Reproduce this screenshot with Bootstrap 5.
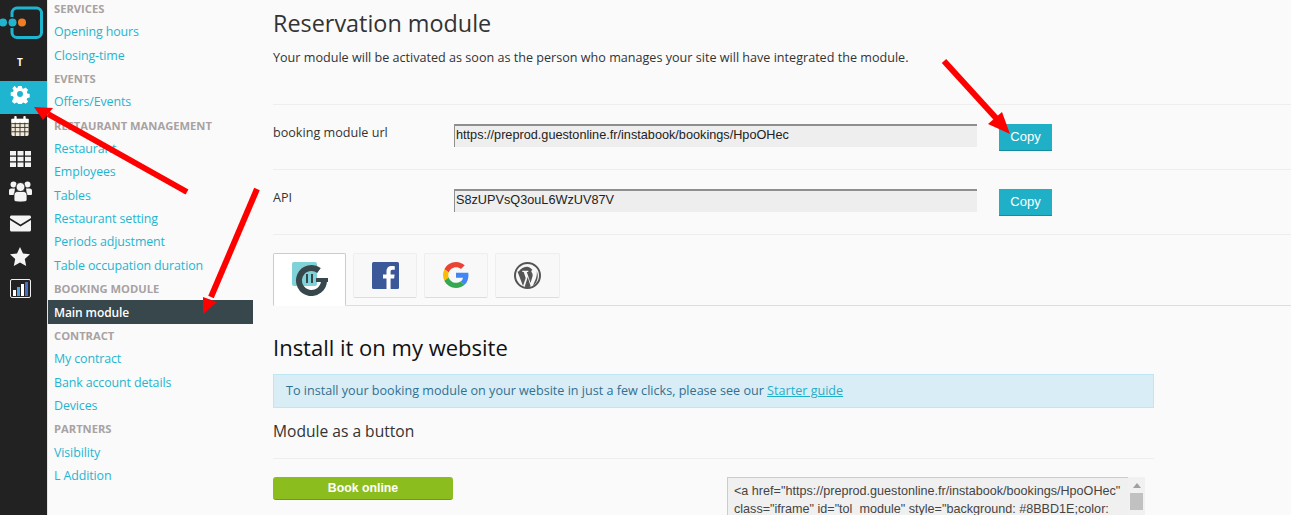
<!DOCTYPE html>
<html lang="en">
<head>
  <meta charset="UTF-8" />
  <meta name="viewport" content="width=device-width, initial-scale=1" />
  <title>Reservation module</title>
  <link href="https://cdn.jsdelivr.net/npm/bootstrap@5.3.0/dist/css/bootstrap.min.css" rel="stylesheet" />
  <style>
    html, body { height: 515px; overflow: hidden; }
    body { background: #fafafa; font-family: "Open Sans", sans-serif; font-size: 12.6px; color: #333; }
    .page-wrap { height: 515px; }
    .side-bar { width: 47px; background: #222; flex: none; }
    .side-logo { height: 43px; }
    .side-user { height: 38px; padding-right: 7px; color: #fff; font-weight: 700; font-size: 10px; }
    .side-item { height: 32.4px; padding: 0 7px 7px 0; }
    .side-item.active-item { height: 33px; background: #1fb5d0; }
    .side-menu { width: 206px; flex: none; margin-top: -3px; border-left: 1px solid #e4e4e4; }
    .menu-head, .menu-link { display: block; height: 23.35px; line-height: 23.35px; padding-left: 6px; white-space: nowrap; }
    .menu-head { font-size: 11.2px; font-weight: 700; color: #a8a2a2; }
    .menu-link { color: #1fb5d0; text-decoration: none; font-size: 12.4px; letter-spacing: -.1px; }
    .menu-link.current { background: #37474b; color: #fff; font-weight: 600; font-size: 12px; line-height: 25px; }
    .main-area { margin-left: 20px; flex: 1; min-width: 0; }
    .page-title { font-size: 23.4px; line-height: 32px; margin: 7px 0 0; font-weight: 400; color: #333; }
    .page-intro { margin: 10px 0 0; line-height: 18px; height: 55px; }
    .key-row { height: 65px; border-top: 1px solid #eee; padding-top: 19px; }
    .key-row.last-row { height: 66px; border-bottom: 1px solid #eee; }
    .key-label { width: 181px; padding-top: 1px; line-height: 16px; }
    .key-input { width: 523px; height: 23px; padding: 0 1px 3px; border-width: 2px 0 0 1px; border-style: solid; border-color: #8f8f8f; border-radius: 0; background: #eee; font-family: "Liberation Sans", sans-serif; font-size: 12.7px; line-height: 17px; color: #222; }
    .copy-btn { width: 53px; height: 27px; margin-left: 22px; padding: 0; background: #1fb0c8; border: 0; border-bottom: 1px solid #148da3; border-radius: 0; color: #fff; font-family: "Liberation Sans", sans-serif; font-size: 13px; line-height: 24px; }
    .share-tabs { margin-top: 18px; height: 53px; gap: 7px; border-bottom: 1px solid #ddd; align-items: flex-start; }
    .share-tabs .nav-link { padding: 0; height: 45px; border: 1px solid #eee; border-bottom-color: #ddd; border-radius: 2px; background: #f8f8f8; margin: 0; }
    .share-tabs .nav-link.active { height: 53px; background: #fff; border-color: #ccc #ccc #fff; }
    .tab-one { width: 73px; } .tab-two { width: 64px; } .tab-three { width: 64px; } .tab-four { width: 65px; }
    .install-title { font-size: 22px; line-height: 30px; margin: 26px 0 0; font-weight: 400; color: #111; }
    .install-note { width: 881px; height: 34px; margin: 12px 0 0; padding: 0 12px; line-height: 32px; border-radius: 0; background: #d9edf7; border: 1px solid #bce8f1; color: #31708f; }
    .install-note a { color: #1fb0c8; }
    .sub-title { font-size: 15.6px; line-height: 20px; margin: 13px 0 0; font-weight: 400; color: #333; }
    .sub-rule { width: 881px; height: 11px; margin-top: 7px; border-bottom: 1px solid #eee; }
    .button-row { width: 872px; margin-top: 18px; }
    .book-btn { width: 180px; height: 23px; padding: 0; background: #8bbd1e; border: 0; border-bottom: 1px solid #6f9a12; border-radius: 3px; color: #fff; font-weight: 700; font-family: "Liberation Sans", sans-serif; font-size: 12.3px; line-height: 20px; }
    .code-box { width: 418px; height: 60px; display: flex; }
    .code-text { width: 401px; height: 60px; padding: 4px 6px; border: 1px solid #ccc; border-right: 0; background: #f0f0f0; font-family: "Liberation Sans", sans-serif; font-size: 12.6px; line-height: 18px; color: #444; white-space: nowrap; overflow: hidden; }
    .code-scroll { width: 17px; background: #f1f1f1; }
    .code-scroll i { display: block; width: 13px; height: 17px; margin: 17px 2px 0; background: #c1c1c1; }
    .code-scroll b { display: block; width: 0; margin: 6px auto -12px; border: 4px solid transparent; border-bottom: 5px solid #a0a0a0; border-top: 0; }
    .arrow-layer { position: absolute; left: 0; top: 0; pointer-events: none; }
  </style>
</head>
<body>

<div class="page-wrap d-flex position-relative">
  <!-- icon bar -->
  <div class="side-bar d-flex flex-column">
    <div class="side-logo">
      <svg width="47" height="43" viewBox="0 0 47 43">
        <rect x="12" y="8" width="29.5" height="29.5" rx="5" fill="none" stroke="#1fb5d0" stroke-width="3"/>
        <rect x="8" y="17" width="8" height="11" fill="#222"/>
        <circle cx="3" cy="22.5" r="4" fill="#1fb5d0"/><circle cx="12.5" cy="22.5" r="4" fill="#1fb5d0"/><circle cx="22" cy="22.5" r="4" fill="#f07d22"/>
      </svg>
    </div>
    <div class="side-user d-flex align-items-center justify-content-center">T</div>
    <div class="side-item active-item d-flex align-items-center justify-content-center">
      <svg width="20" height="20" viewBox="0 0 20 20"><path fill="#fff" fill-rule="evenodd" d="M8 1h4l.5 2.6 1.5.7 2.3-1.5 2.7 2.8-1.5 2.2.7 1.6 2.6.5v4l-2.6.5-.7 1.6 1.5 2.2-2.7 2.7-2.3-1.5-1.5.7-.5 2.6H8l-.5-2.6-1.500-.7-2.300 1.500-2.700-2.700L3 14.200l-.7-1.600L-.3 12V8l2.600-.5.7-1.600-1.500-2.200 2.700-2.800L6 3.400l1.500-.7zM10 6.700a3.300 3.300 0 1 0 0 6.600 3.300 3.300 0 0 0 0-6.600z" transform="translate(1 1) scale(.9)"/></svg>
    </div>
    <div class="side-item d-flex align-items-center justify-content-center">
      <svg width="20" height="21" viewBox="0 0 20 22"><rect x="1" y="3" width="18" height="18" rx="1.500" fill="#f3ead8"/><rect x="1" y="3" width="18" height="4" fill="#fff"/><path d="M1 8h18M1 12h18M1 16.500h18M5 7v14M10 7v14M15 7v14" stroke="#3a3a3a" stroke-width="1"/><rect x="4" y="0" width="2.500" height="5" rx="1" fill="#fff"/><rect x="13.500" y="0" width="2.500" height="5" rx="1" fill="#fff"/></svg>
    </div>
    <div class="side-item d-flex align-items-center justify-content-center">
      <svg width="21" height="16" viewBox="0 0 21 16"><path fill="#f4f4f4" d="M0 0h6v4.500H0zM7.500 0h6v4.500h-6zM15 0h6v4.500h-6zM0 5.700h6v4.500H0zM7.500 5.700h6v4.500h-6zM15 5.700h6v4.500h-6zM0 11.400h6V16H0zM7.500 11.400h6V16h-6zM15 11.400h6V16h-6z"/></svg>
    </div>
    <div class="side-item d-flex align-items-center justify-content-center">
      <svg width="23" height="21" viewBox="0 0 23 21"><g fill="#f4f4f4"><circle cx="4.500" cy="3.500" r="3"/><circle cx="18.500" cy="3.500" r="3"/><path d="M0 13V9.500C0 8 1.500 7.500 3 7.500h3L5 14H1.500C.5 14 0 13.800 0 13zM23 13V9.500c0-1.500-1.500-2-3-2h-3l1 6.500h3.500c1 0 1.500-.2 1.500-1z"/><circle cx="11.500" cy="6" r="4.500" stroke="#222"/><path d="M5 19V14c0-2.500 2-3.500 3.500-3.500h6c1.500 0 3.500 1 3.500 3.500v5c0 1.300-2 2-6.500 2S5 20.300 5 19z" stroke="#222" stroke-width=".8"/></g></svg>
    </div>
    <div class="side-item d-flex align-items-center justify-content-center">
      <svg width="21" height="17" viewBox="0 0 21 16"><path fill="#f4f4f4" d="M1.500 0h18c.8 0 1.500.7 1.500 1.500v1L10.500 9 0 2.500v-1C0 .7.700 0 1.500 0zM0 4.500l10.500 6.500L21 4.500v10c0 .8-.7 1.500-1.500 1.500h-18C.7 16 0 15.300 0 14.500z"/></svg>
    </div>
    <div class="side-item d-flex align-items-center justify-content-center">
      <svg width="20" height="19" viewBox="0 0 20 19"><path fill="#f4f4f4" d="M10 0l3 6.500 7 .8-5.200 4.700L16.200 19 10 15.400 3.800 19l1.400-7L0 7.300l7-.8z"/></svg>
    </div>
    <div class="side-item d-flex align-items-center justify-content-center">
      <svg width="21" height="19" viewBox="0 0 21 19"><rect x=".5" y=".5" width="20" height="18" rx="1.500" fill="#222" stroke="#eee"/><path fill="#fff" d="M3 11h3v6H3z"/><path fill="#5aa5e0" d="M7 8h3v9H7z"/><path fill="#fff" d="M11 5h3v12h-3z"/><path fill="#4a6fc0" d="M15 3h3v14h-3z"/></svg>
    </div>
  </div>

  <!-- text menu -->
  <div class="side-menu">
    <span class="menu-head">SERVICES</span>
    <a class="menu-link" href="#">Opening hours</a>
    <a class="menu-link" href="#">Closing-time</a>
    <span class="menu-head">EVENTS</span>
    <a class="menu-link" href="#">Offers/Events</a>
    <span class="menu-head">RESTAURANT MANAGEMENT</span>
    <a class="menu-link" href="#">Restaurant</a>
    <a class="menu-link" href="#">Employees</a>
    <a class="menu-link" href="#">Tables</a>
    <a class="menu-link" href="#">Restaurant setting</a>
    <a class="menu-link" href="#">Periods adjustment</a>
    <a class="menu-link" href="#">Table occupation duration</a>
    <span class="menu-head">BOOKING MODULE</span>
    <a class="menu-link current" href="#">Main module</a>
    <span class="menu-head">CONTRACT</span>
    <a class="menu-link" href="#">My contract</a>
    <a class="menu-link" href="#">Bank account details</a>
    <a class="menu-link" href="#">Devices</a>
    <span class="menu-head">PARTNERS</span>
    <a class="menu-link" href="#">Visibility</a>
    <a class="menu-link" href="#">L Addition</a>
  </div>

  <!-- main content -->
  <main class="main-area">
    <h1 class="page-title">Reservation module</h1>
    <p class="page-intro">Your module will be activated as soon as the person who manages your site will have integrated the module.</p>

    <div class="key-row d-flex align-items-start">
      <div class="key-label">booking module url</div>
      <input class="key-input" type="text" value="https://preprod.guestonline.fr/instabook/bookings/HpoOHec" />
      <button class="btn copy-btn" type="button">Copy</button>
    </div>
    <div class="key-row last-row d-flex align-items-start">
      <div class="key-label">API</div>
      <input class="key-input" type="text" value="S8zUPVsQ3ouL6WzUV87V" />
      <button class="btn copy-btn" type="button">Copy</button>
    </div>

    <ul class="nav nav-tabs share-tabs">
      <li class="nav-item"><a class="nav-link active tab-one d-flex justify-content-center pt-2" href="#">
        <svg width="36" height="34" viewBox="0 0 36 34"><rect x="0" y="0" width="25" height="24" rx="2" fill="#7fd3d8"/><path d="M32 18.500a12.500 12.500 0 1 1-5-10" fill="none" stroke="#37474b" stroke-width="6"/><path d="M24 18h12" stroke="#37474b" stroke-width="4"/><path d="M15 12v9M20 12v9" stroke="#37474b" stroke-width="2"/></svg>
      </a></li>
      <li class="nav-item"><a class="nav-link tab-two d-flex justify-content-center pt-2" href="#">
        <svg width="27" height="27" viewBox="0 0 27 27"><rect width="27" height="27" rx="1.500" fill="#3b5998"/><path fill="#fff" d="M18.600 27V16.500h3.500l.5-4.100h-4V9.800c0-1.200.3-2 2-2h2.200V4.200c-.4-.1-1.700-.2-3.100-.2-3.100 0-5.200 1.900-5.200 5.300v3.100H11v4.100h3.500V27z"/></svg>
      </a></li>
      <li class="nav-item"><a class="nav-link tab-three d-flex justify-content-center pt-2" href="#">
        <svg width="26" height="26" viewBox="0 0 48 48"><path fill="#EA4335" d="M24 9.500c3.500 0 6.700 1.200 9.200 3.600l6.900-6.900C35.900 2.400 30.500 0 24 0 14.600 0 6.500 5.400 2.600 13.200l8 6.200C12.400 13.700 17.700 9.500 24 9.500z"/><path fill="#4285F4" d="M47 24.500c0-1.600-.1-3.100-.4-4.500H24v9h12.900c-.6 3-2.200 5.500-4.700 7.200l7.700 6C44.400 38 47 31.900 47 24.500z"/><path fill="#FBBC05" d="M10.500 28.600c-.5-1.400-.8-3-.8-4.600s.3-3.200.8-4.600l-8-6.200C.9 16.500 0 20.100 0 24s.9 7.500 2.600 10.800z"/><path fill="#34A853" d="M24 48c6.500 0 11.900-2.100 15.900-5.800l-7.700-6c-2.200 1.500-4.900 2.300-8.200 2.300-6.300 0-11.600-4.200-13.500-9.900l-8 6.200C6.500 42.600 14.600 48 24 48z"/></svg>
      </a></li>
      <li class="nav-item"><a class="nav-link tab-four d-flex justify-content-center pt-2" href="#">
        <svg width="27" height="27" viewBox="0 0 27 27"><circle cx="13.500" cy="13.500" r="12.500" fill="none" stroke="#555" stroke-width="2"/><path fill="#555" d="M3.500 9.500L9 24l2.700-8-2-6H8.300V8.700h6v1.300h-1.500L16.500 21l2-6.500c.7-2.300-.5-3.500-1-4.500-.4-.8 0-1.800 1-2-2.100-2.300-4-3.200-5-3.200-3.500 0-7 1.800-8.800 4.700z"/><path fill="#555" d="M13.700 15l-3 9.700c2 .6 4.200.5 6-.2zM22.700 9c.5 3 0 5-1 8l-2.900 7c4-2.200 6.500-9.500 3.900-15z"/></svg>
      </a></li>
    </ul>

    <h2 class="install-title">Install it on my website</h2>
    <div class="alert alert-info install-note">To install your booking module on your website in just a few clicks, please see our <a href="#">Starter guide</a></div>
    <h3 class="sub-title">Module as a button</h3>
    <div class="sub-rule"></div>
    <div class="button-row d-flex justify-content-between align-items-start">
      <button class="btn book-btn" type="button">Book online</button>
      <div class="code-box">
        <div class="code-text">&lt;a href="https://preprod.guestonline.fr/instabook/bookings/HpoOHec"<br />class="iframe" id="tol_module" style="background: #8BBD1E;color:</div>
        <div class="code-scroll"><b></b><i></i></div>
      </div>
    </div>
  </main>

  <!-- red arrows drawn over the screenshot -->
  <svg class="arrow-layer" width="1291" height="515" viewBox="0 0 1291 515">
    <g stroke="#f00" stroke-width="6" fill="none">
      <path d="M187 192L48 114"/>
      <path d="M257 189L211 297"/>
      <path d="M944 61L996 118"/>
    </g>
    <g fill="#f00">
      <path d="M34 107L53 108 43 120z"/>
      <path d="M203 314L203 297 217 302z"/>
      <path d="M1010 134L1002 112 988 124z"/>
    </g>
  </svg>
</div>

<script src="https://cdn.jsdelivr.net/npm/bootstrap@5.3.0/dist/js/bootstrap.bundle.min.js"></script>
</body>
</html>
